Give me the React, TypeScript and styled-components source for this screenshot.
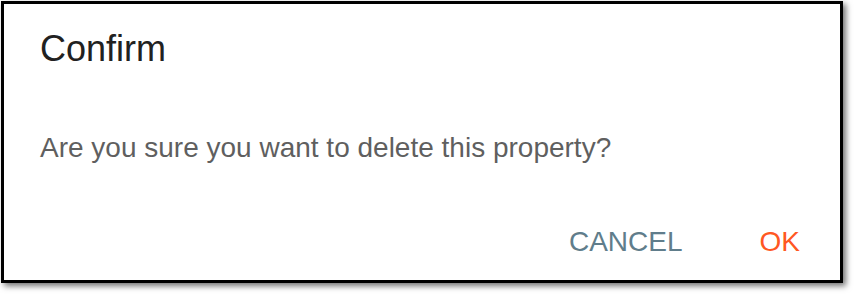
import React from "react";
import styled, { createGlobalStyle } from "styled-components";

const Global = createGlobalStyle`
  html, body { margin: 0; padding: 0; background: #ffffff; }
  body { font-family: "Liberation Sans", Arial, sans-serif; }
`;

const Page = styled.div`
  padding: 1px 0 0 1px;
  width: 854px;
  height: 294px;
  box-sizing: border-box;
`;

const Dialog = styled.div`
  width: 842px;
  height: 282px;
  box-sizing: border-box;
  border: 3px solid #000000;
  background: #ffffff;
  box-shadow: 3px 3px 6px rgba(0, 0, 0, 0.55);
  padding: 24px 40px 22px 36px;
  display: flex;
  flex-direction: column;
`;

const Title = styled.h2`
  margin: 0;
  font-size: 36px;
  line-height: 42px;
  font-weight: 400;
  color: #212121;
`;

const Message = styled.p`
  margin: 62px 0 0;
  font-size: 28px;
  line-height: 32px;
  color: #5f5f5f;
`;

const Actions = styled.div`
  margin-top: auto;
  display: flex;
  justify-content: flex-end;
  gap: 77px;
`;

const ActionButton = styled.button<{ $tone: string }>`
  border: 0;
  background: transparent;
  padding: 0;
  font-family: inherit;
  font-size: 28px;
  line-height: 32px;
  color: ${(p) => p.$tone};
  text-transform: uppercase;
  cursor: pointer;
`;

export default function App() {
  return (
    <>
      <Global />
      <Page>
        <Dialog>
          <Title>Confirm</Title>
          <Message>Are you sure you want to delete this property?</Message>
          <Actions>
            <ActionButton $tone="#607d8b">Cancel</ActionButton>
            <ActionButton $tone="#ff5722">OK</ActionButton>
          </Actions>
        </Dialog>
      </Page>
    </>
  );
}
